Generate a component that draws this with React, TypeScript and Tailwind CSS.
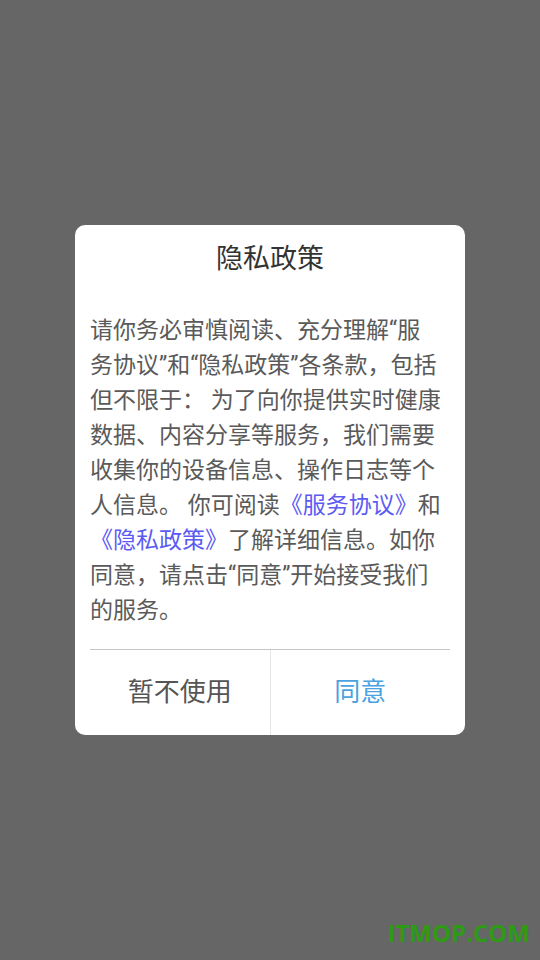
import React from 'react';

const font = { fontFamily: 'Roboto, "Noto Sans CJK SC", sans-serif' };

function App() {
  return (
    <div className="relative h-screen w-full bg-[#666666] flex items-center justify-center" style={font}>
      {/* Privacy dialog */}
      <div className="w-[390px] bg-white rounded-[10px] overflow-hidden">
        <div className="h-[68px] flex items-center justify-center text-[27px] text-[#333333]">隐私政策</div>
        <div className="mt-5 px-[15px] text-[23px] leading-[35px] text-[#5a5a5a] whitespace-nowrap">
          请你务必审慎阅读、充分理解“服<br />
          务协议”和“隐私政策”各条款，包括<br />
          但不限于： 为了向你提供实时健康<br />
          数据、内容分享等服务，我们需要<br />
          收集你的设备信息、操作日志等个<br />
          人信息。 你可阅读<span className="text-[#5b5bf2]">《服务协议》</span>和<br />
          <span className="text-[#5b5bf2]">《隐私政策》</span>了解详细信息。如你<br />
          同意，请点击“同意”开始接受我们<br />
          的服务。
        </div>
        <div className="mx-[15px] mt-[21px] border-t border-[#c6c6c6] flex h-[86px]">
          <button className="flex-1 text-[26px] text-[#555555] border-r border-[#e6e6e6]">暂不使用</button>
          <button className="flex-1 text-[26px] text-[#4aa3df]">同意</button>
        </div>
      </div>

      {/* watermark */}
      <div
        className="absolute right-[10px] bottom-[9px] text-[24px] font-bold text-[#2f9a14]"
        style={{ fontFamily: '"Open Sans", sans-serif' }}
      >
        ITMOP.COM
      </div>
    </div>
  );
}

export default App;
